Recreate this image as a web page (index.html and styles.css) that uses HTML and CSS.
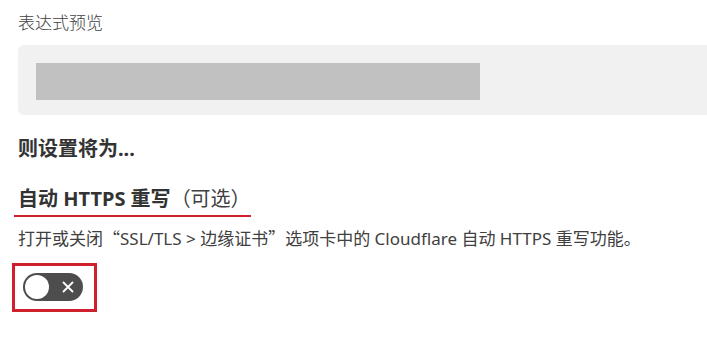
FILE: index.html
```html
<!DOCTYPE html>
<html>
<head>
  <title>自动 HTTPS 重写</title>
  <link rel="stylesheet" href="styles.css">
</head>
<body>
  <div class="rule-editor">
    <div class="field-label">表达式预览</div>
    <div class="expression-preview">
      <div class="expression-bar"></div>
    </div>
    <h2 class="then-title">则设置将为...</h2>
    <div class="setting">
      <h3 class="setting-title">
        <span class="marked">自动 HTTPS 重写<span class="optional">（可选）</span></span>
      </h3>
      <p class="setting-desc">打开或关闭<span class="cjk-quote">“</span>SSL/TLS &gt; 边缘证书<span class="cjk-quote">”</span>选项卡中的 Cloudflare 自动 HTTPS 重写功能。</p>
      <div class="toggle-frame">
        <div class="toggle">
          <span class="toggle-knob"></span>
          <svg class="toggle-x" width="12" height="12" viewBox="0 0 12 12">
            <path d="M1.5 1.5 L10.5 10.5 M10.5 1.5 L1.5 10.5" stroke="#fff" stroke-width="1.8" stroke-linecap="round"/>
          </svg>
        </div>
      </div>
    </div>
  </div>
</body>
</html>
```

FILE: styles.css
```css
body {
  margin: 0;
  background: #fff;
  overflow: hidden;
  font-family: "Noto Sans", "Noto Sans CJK SC", sans-serif;
  color: #333;
}
.rule-editor {
  padding: 11px 0 0 18px;
}
.field-label {
  font-size: 17px;
  line-height: 24px;
  color: #404040;
  font-weight: 300;
}
.expression-preview {
  width: 720px;
  margin-top: 10px;
  padding: 18px 18px 15px;
  background: #f1f1f1;
  border-radius: 6px;
  box-sizing: border-box;
}
.expression-bar {
  width: 444px;
  height: 37px;
  background: #c1c1c1;
}
.then-title {
  margin: 20px 0 0;
  font-size: 20px;
  line-height: 28px;
  font-weight: 700;
  color: #333;
}
.setting {
  margin-top: 22px;
}
.setting-title {
  margin: 0;
  font-size: 20px;
  line-height: 28px;
  font-weight: 700;
  color: #333;
}
.marked {
  display: inline-block;
  vertical-align: top;
  margin-left: -4px;
  padding: 0 0 2px 4px;
  border-bottom: 2px solid #d0202e;
}
.optional {
  font-weight: 400;
  color: #404040;
}
.setting-desc {
  margin: 9px 0 0;
  font-size: 17px;
  line-height: 24px;
  color: #404040;
}
.cjk-quote {
  font-family: "Noto Sans CJK SC", sans-serif;
}
.toggle-frame {
  display: inline-block;
  margin: 12px 0 0 -6px;
  padding: 7px 11px 8px 8px;
  border: 3px solid #d0202e;
}
.toggle {
  position: relative;
  width: 60px;
  height: 28px;
  border-radius: 14px;
  background: #4d4d4d;
  display: flex;
  align-items: center;
}
.toggle-knob {
  width: 24px;
  height: 24px;
  margin-left: 2px;
  border-radius: 50%;
  background: #fff;
}
.toggle-x {
  margin-left: 13px;
}
```
